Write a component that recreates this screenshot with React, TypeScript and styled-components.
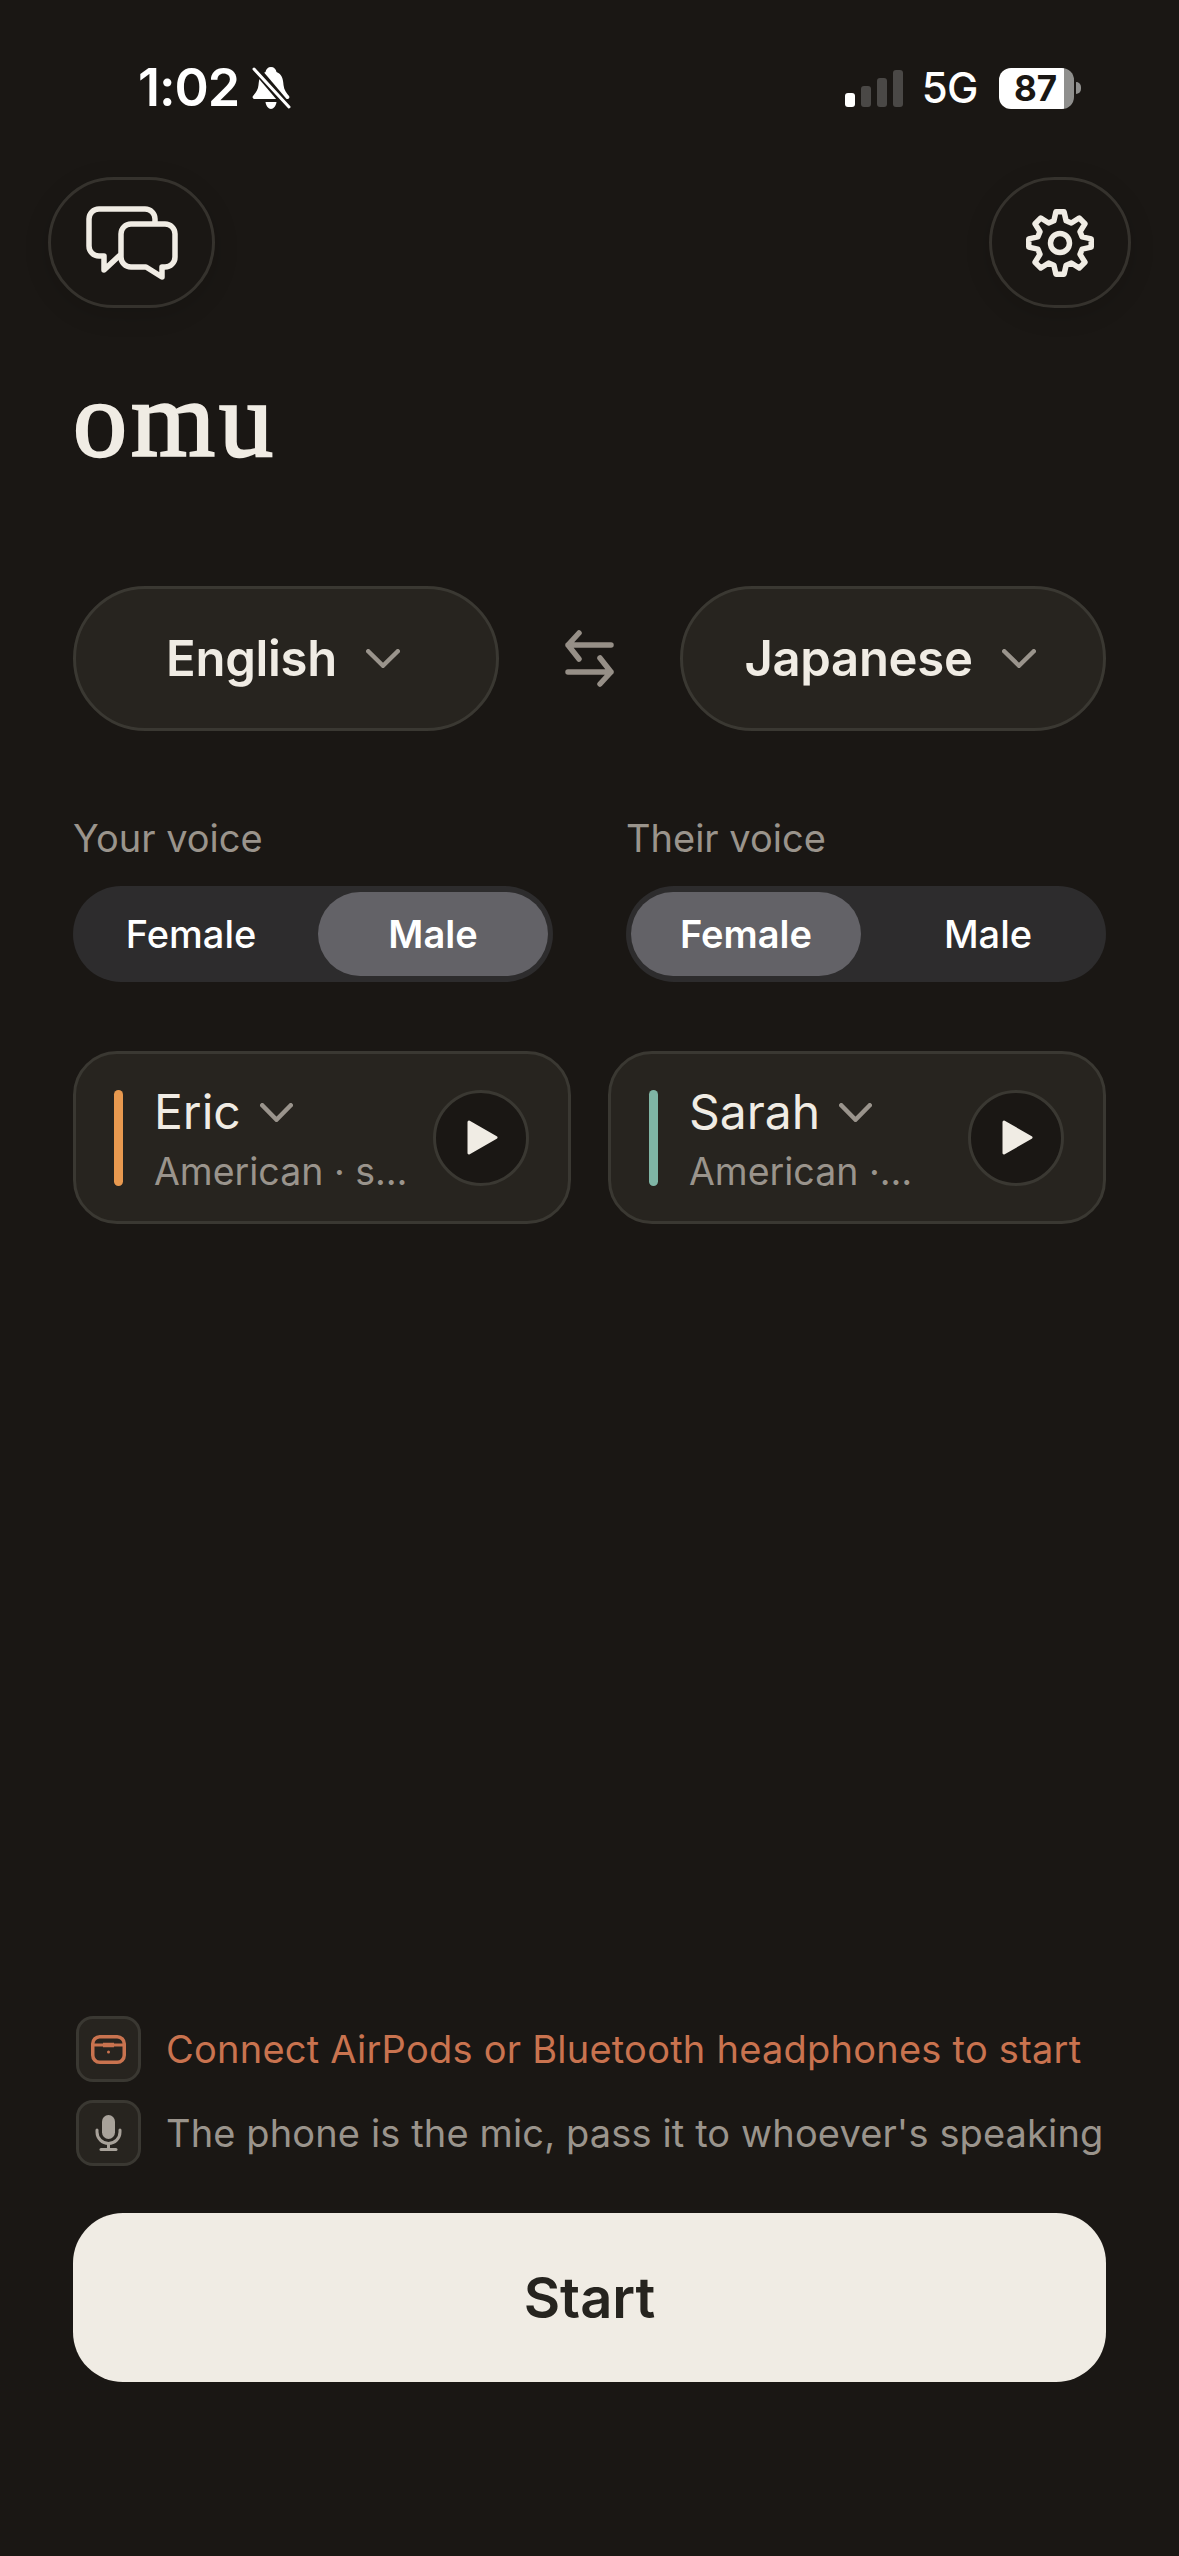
import React from "react";
import styled, { createGlobalStyle } from "styled-components";

const GlobalStyle = createGlobalStyle`
  html, body {
    margin: 0;
    padding: 0;
    background: #1a1714;
  }
  * {
    box-sizing: border-box;
  }
`;

const Page = styled.div`
  width: 1179px;
  height: 2556px;
  overflow: hidden;
  display: flex;
  flex-direction: column;
  background: #1a1714;
  color: #f0ece4;
  font-family: Inter, "Liberation Sans", sans-serif;
`;

const StatusBar = styled.div`
  height: 42px;
  margin-top: 67px;
  padding: 0 98px 0 138px;
  display: flex;
  align-items: center;
  justify-content: space-between;
  color: #fff;
`;

const StatusLeft = styled.div`
  display: flex;
  align-items: center;
  gap: 13px;
`;

const Clock = styled.span`
  font-size: 52px;
  line-height: 42px;
  font-weight: 600;
  letter-spacing: -1px;
`;

const StatusRight = styled.div`
  display: flex;
  align-items: center;
`;

const Signal = styled.div`
  display: flex;
  align-items: flex-end;
  gap: 6px;
  height: 37px;
  margin-right: 19px;
`;

const SignalBar = styled.div<{ $h: number; $on?: boolean }>`
  width: 10px;
  height: ${(p) => p.$h}px;
  border-radius: 3px;
  background: ${(p) => (p.$on ? "#fff" : "#4a4846")};
`;

const Network = styled.span`
  font-size: 42px;
  line-height: 42px;
  font-weight: 500;
  margin-right: 21px;
  letter-spacing: -0.5px;
`;

const Battery = styled.div`
  width: 75px;
  height: 41px;
  border-radius: 12px;
  background: linear-gradient(90deg, #fff 0 65px, #8f8f8d 65px);
  color: #1a1714;
  font-size: 35px;
  line-height: 41px;
  font-weight: 700;
  padding-left: 15px;
`;

const BatteryTip = styled.div`
  width: 5px;
  height: 12px;
  margin-left: 2px;
  border-radius: 0 6px 6px 0;
  background: #8f8f8d;
`;

const TopRow = styled.div`
  margin-top: 68px;
  padding: 0 48px;
  display: flex;
  justify-content: space-between;
`;

const RoundButton = styled.button<{ $w: number }>`
  width: ${(p) => p.$w}px;
  height: 131px;
  border-radius: 66px;
  border: 3px solid #35322d;
  background: #1a1714;
  color: #f0ece4;
  padding: 0;
  display: flex;
  align-items: center;
  justify-content: center;
  box-shadow: 0 6px 26px rgba(0, 0, 0, 0.14);
`;

const Title = styled.h1`
  margin: 58px 0 0 73px;
  font-family: "Liberation Serif", serif;
  font-size: 108px;
  line-height: 108px;
  font-weight: 400;
  letter-spacing: 4px;
  -webkit-text-stroke: 2.4px #f0ece4;
  color: #f0ece4;
`;

const Content = styled.div`
  padding: 0 73px;
  display: flex;
  flex-direction: column;
`;

const LangRow = styled.div`
  margin-top: 112px;
  display: flex;
  align-items: center;
  justify-content: space-between;
`;

const LangPill = styled.button`
  width: 426px;
  height: 145px;
  border-radius: 73px;
  border: 3px solid #3a3832;
  background: #27241f;
  color: #f0ece4;
  font-family: inherit;
  font-size: 49px;
  font-weight: 600;
  letter-spacing: -0.3px;
  display: flex;
  align-items: center;
  justify-content: center;
  gap: 29px;
  padding: 0 6px 0 0;
`;

const VoiceRow = styled.div`
  margin-top: 84px;
  display: flex;
  gap: 73px;
`;

const VoiceColumn = styled.div`
  flex: 1;
  display: flex;
  flex-direction: column;
`;

const VoiceLabel = styled.div`
  font-size: 38px;
  line-height: 46px;
  color: #9a948c;
  margin-bottom: 25px;
`;

const Segment = styled.div`
  height: 96px;
  border-radius: 48px;
  background: #2d2c2d;
  padding: 6px 5px;
  display: flex;
`;

const SegmentOption = styled.div<{ $active?: boolean; $thumbSide?: "left" | "right" }>`
  flex: ${(p) => (p.$active ? "0 0 230px" : "1")};
  border-radius: 42px;
  display: flex;
  align-items: center;
  justify-content: center;
  font-size: 38px;
  font-weight: ${(p) => (p.$active ? 600 : 500)};
  color: #fff;
  background: ${(p) => (p.$active ? "#636267" : "transparent")};
  padding-left: ${(p) => (p.$thumbSide === "left" ? "14px" : "0")};
  padding-right: ${(p) => (p.$thumbSide === "right" ? "14px" : "0")};
`;

const CardRow = styled.div`
  margin-top: 69px;
  display: flex;
  gap: 37px;
`;

const VoiceCard = styled.div`
  flex: 1;
  height: 173px;
  border-radius: 44px;
  border: 3px solid #3a3832;
  background: #27241f;
  padding: 0 39px 0 38px;
  display: flex;
  align-items: center;
`;

const AccentBar = styled.div<{ $color: string }>`
  flex: none;
  width: 9px;
  height: 96px;
  border-radius: 5px;
  background: ${(p) => p.$color};
  margin-right: 31px;
`;

const VoiceInfo = styled.div`
  flex: 1;
  min-width: 0;
  padding-top: 3px;
`;

const VoiceName = styled.div`
  display: flex;
  align-items: center;
  gap: 19px;
  font-size: 48px;
  line-height: 56px;
  color: #f0ece4;
`;

const VoiceMeta = styled.div`
  margin-top: 10px;
  font-size: 37.5px;
  line-height: 44px;
  color: #9a948c;
  white-space: nowrap;
`;

const PlayButton = styled.button`
  flex: none;
  width: 96px;
  height: 96px;
  border-radius: 50%;
  border: 3px solid #3a3832;
  background: #1a1714;
  padding: 0 0 0 3px;
  display: flex;
  align-items: center;
  justify-content: center;
`;

const Footer = styled.div`
  margin-top: auto;
  padding: 0 73px 174px;
  display: flex;
  flex-direction: column;
`;

const Notice = styled.div<{ $warn?: boolean }>`
  display: flex;
  align-items: center;
  gap: 25px;
  padding-left: 3px;
  margin-bottom: 18px;
  font-size: 38px;
  letter-spacing: ${(p) => (p.$warn ? "0.24px" : "0.13px")};
  white-space: nowrap;
  color: ${(p) => (p.$warn ? "#c9734f" : "#9a948c")};
`;

const NoticeIcon = styled.div`
  flex: none;
  width: 65px;
  height: 66px;
  border-radius: 17px;
  border: 3px solid #3a3832;
  background: #27241f;
  display: flex;
  align-items: center;
  justify-content: center;
`;

const StartButton = styled.button`
  margin-top: 29px;
  height: 169px;
  border: none;
  border-radius: 50px;
  background: #f0ece4;
  color: #26241f;
  font-family: inherit;
  font-size: 56px;
  font-weight: 600;
`;

const Chevron = ({ w, h, sw }: { w: number; h: number; sw: number }) => (
  <svg width={w} height={h} viewBox={`0 0 ${w} ${h}`} fill="none" stroke="#9a948c" strokeWidth={sw} strokeLinecap="round" strokeLinejoin="round">
    <path d={`M${sw / 2} ${sw / 2} L${w / 2} ${h - sw / 2} L${w - sw / 2} ${sw / 2}`} />
  </svg>
);

const BellSlash = () => (
  <svg width="39" height="42" viewBox="0 0 39 42">
    <path fill="#fff" d="M19 0c-3 0-5 2-5.500 5C8 7 7 12 6.500 18c-.4 5-3 8-5.500 11-1 1.500 0 3 2 3h32c2 0 3-1.500 2-3-2.500-3-5-6-5.500-11C31 12 30 7 24.500 5 24 2 22 0 19 0zM13.500 35c.5 4 3 7 5.500 7s5-3 5.500-7z" />
    <path stroke="#1a1714" strokeWidth="8" d="M3 1 L37 41" />
    <path stroke="#fff" strokeWidth="3" strokeLinecap="round" d="M2 2 L37 40" />
  </svg>
);

const ChatIcon = () => (
  <svg width="92" height="74" viewBox="0 0 92 74" fill="none" stroke="#f0ece4" strokeWidth="5.500" strokeLinejoin="round" strokeLinecap="round">
    <path d="M69 17 V13 a10 10 0 0 0 -10 -10 H13 a10 10 0 0 0 -10 10 V40 a10 10 0 0 0 10 10 h5 V64 L33 50" />
    <path d="M45 18 H79 a10 10 0 0 1 10 10 V51 a10 10 0 0 1 -10 10 H76 V71 L60 61 H45 a10 10 0 0 1 -10 -10 V28 a10 10 0 0 1 10 -10 z" />
  </svg>
);

// eight tooth outline, centre line only, the stroke rounds it off
const gearPath = () => {
  const cx = 35;
  const cy = 35;
  const pts: string[] = [];
  for (let i = 0; i < 8; i++) {
    const a = (i * Math.PI) / 4 - Math.PI / 2;
    const at = (r: number, d: number) =>
      `${(cx + r * Math.cos(a + d)).toFixed(2)} ${(cy + r * Math.sin(a + d)).toFixed(2)}`;
    pts.push(at(23, -0.27), at(31.5, -0.13), at(31.5, 0.13), at(23, 0.27));
  }
  return `M${pts.join(" L")} z`;
};

const GearIcon = () => (
  <svg width="70" height="70" viewBox="0 0 70 70" fill="none" stroke="#f0ece4" strokeWidth="5.500" strokeLinejoin="round">
    <path d={gearPath()} />
    <circle cx="35" cy="35" r="9.500" />
  </svg>
);

const SwapIcon = () => (
  <svg width="49" height="57" viewBox="0 0 49 57" fill="none" stroke="#968f87" strokeWidth="5.500" strokeLinecap="round" strokeLinejoin="round">
    <path d="M46 15 H3 M14 3 L3 15 L14 29" />
    <path d="M3 42 H46 M35 28 L46 42 L35 54" />
  </svg>
);

const PlayIcon = () => (
  <svg width="31" height="35" viewBox="0 0 31 35">
    <path fill="#f0ece4" stroke="#f0ece4" strokeWidth="3" strokeLinejoin="round" d="M2 2 L29 17.500 L2 33 z" />
  </svg>
);

const CaseIcon = () => (
  <svg width="35" height="29" viewBox="0 0 35 29" fill="none" stroke="#c9734f" strokeWidth="3.500">
    <rect x="1.750" y="1.750" width="31.500" height="25.500" rx="7" />
    <path d="M2 10 H33" strokeWidth="3" />
    <path d="M12 10 H23" strokeWidth="4.500" />
    <circle cx="17.500" cy="17" r="1.500" fill="#c9734f" stroke="none" />
  </svg>
);

const MicIcon = () => (
  <svg width="27" height="36" viewBox="0 0 27 36" fill="none" stroke="#a8a29a" strokeWidth="3" strokeLinecap="round">
    <rect x="7" y="0" width="13" height="24" rx="6.500" fill="#a8a29a" stroke="none" />
    <path d="M2 15 V17 a11.500 11.500 0 0 0 23 0 V15" />
    <path d="M13.500 28.500 V33" />
    <path d="M6 34.500 H21" />
  </svg>
);

const voices = [
  { name: "Eric", meta: "American · s…", color: "#e8994f" },
  { name: "Sarah", meta: "American ·…", color: "#7fb5a5" },
];

export default function App() {
  return (
    <Page>
      <GlobalStyle />
      <StatusBar>
        <StatusLeft>
          <Clock>1:02</Clock>
          <BellSlash />
        </StatusLeft>
        <StatusRight>
          <Signal>
            <SignalBar $h={14} $on />
            <SignalBar $h={21} />
            <SignalBar $h={29} />
            <SignalBar $h={37} />
          </Signal>
          <Network>5G</Network>
          <Battery>87</Battery>
          <BatteryTip />
        </StatusRight>
      </StatusBar>

      <TopRow>
        <RoundButton $w={167}>
          <ChatIcon />
        </RoundButton>
        <RoundButton $w={142}>
          <GearIcon />
        </RoundButton>
      </TopRow>

      <Title>omu</Title>

      <Content>
        <LangRow>
          <LangPill>
            English
            <Chevron w={34} h={19} sw={4.5} />
          </LangPill>
          <SwapIcon />
          <LangPill>
            Japanese
            <Chevron w={34} h={19} sw={4.5} />
          </LangPill>
        </LangRow>

        <VoiceRow>
          <VoiceColumn>
            <VoiceLabel>Your voice</VoiceLabel>
            <Segment>
              <SegmentOption $thumbSide="right">Female</SegmentOption>
              <SegmentOption $active>Male</SegmentOption>
            </Segment>
          </VoiceColumn>
          <VoiceColumn>
            <VoiceLabel>Their voice</VoiceLabel>
            <Segment>
              <SegmentOption $active>Female</SegmentOption>
              <SegmentOption $thumbSide="left">Male</SegmentOption>
            </Segment>
          </VoiceColumn>
        </VoiceRow>

        <CardRow>
          {voices.map((v) => (
            <VoiceCard key={v.name}>
              <AccentBar $color={v.color} />
              <VoiceInfo>
                <VoiceName>
                  {v.name}
                  <Chevron w={33} h={19} sw={4.5} />
                </VoiceName>
                <VoiceMeta>{v.meta}</VoiceMeta>
              </VoiceInfo>
              <PlayButton>
                <PlayIcon />
              </PlayButton>
            </VoiceCard>
          ))}
        </CardRow>
      </Content>

      <Footer>
        <Notice $warn>
          <NoticeIcon>
            <CaseIcon />
          </NoticeIcon>
          Connect AirPods or Bluetooth headphones to start
        </Notice>
        <Notice>
          <NoticeIcon>
            <MicIcon />
          </NoticeIcon>
          The phone is the mic, pass it to whoever's speaking
        </Notice>
        <StartButton>Start</StartButton>
      </Footer>
    </Page>
  );
}
